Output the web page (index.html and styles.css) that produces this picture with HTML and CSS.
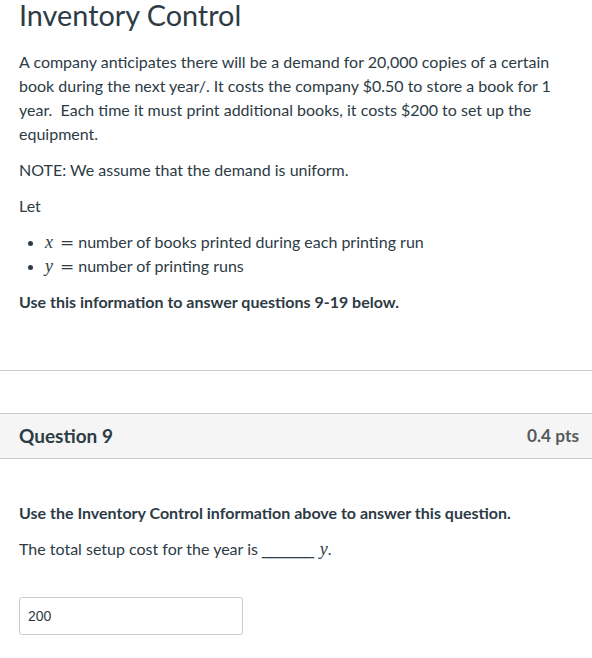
FILE: index.html
```html
<!DOCTYPE html>
<html lang="en">
<head>
<meta charset="utf-8">
<title>Inventory Control</title>
<link rel="stylesheet" href="styles.css">
</head>
<body>
<div class="intro">
  <h1 class="title">Inventory Control</h1>
  <p class="para">A company anticipates there will be a demand for 20,000 copies of a certain book during the next year/. It costs the company $0.50 to store a book for 1 year.&nbsp; Each time it must print additional books, it costs $200 to set up the equipment.</p>
  <p class="para">NOTE: We assume that the demand is uniform.</p>
  <p class="para">Let</p>
  <ul class="vars">
    <li><span class="math"><i class="mi">x</i><span class="mo">=</span></span>number of books printed during each printing run</li>
    <li><span class="math"><i class="mi">y</i><span class="mo">=</span></span>number of printing runs</li>
  </ul>
  <p class="para bold">Use this information to answer questions 9-19 below.</p>
</div>
<hr class="rule">
<section class="question">
  <header class="q-header">
    <span class="q-name">Question 9</span>
    <span class="q-pts">0.4 pts</span>
  </header>
  <div class="q-body">
    <p class="para bold">Use the Inventory Control information above to answer this question.</p>
    <p class="para">The total setup cost for the year is <span class="blank">______</span> <i class="mi after">y</i>.</p>
    <input class="answer" type="text" value="200">
  </div>
</section>
</body>
</html>
```

FILE: styles.css
```css
html, body {
  margin: 0;
  padding: 0;
  background: #fff;
}
body {
  font-family: Lato, "Open Sans", sans-serif;
  font-size: 16px;
  line-height: 24px;
  color: #2d3b45;
}
.intro {
  padding: 0 19px;
}
.title {
  font-size: 28.8px;
  font-weight: 400;
  line-height: 30px;
  margin: 0 0 20px;
}
.para {
  margin: 0 0 12px;
}
.bold {
  font-weight: 700;
}
.vars {
  margin: 0 0 12px;
  padding-left: 26px;
}
.vars li {
  height: 24px;
}
.math {
  line-height: 1;
}
.mi {
  font-family: "Liberation Serif", "DejaVu Serif", serif;
  font-style: italic;
  font-size: 18px;
  line-height: 1;
}
.mi.after {
  margin-left: 2px;
}
.mo {
  font-family: "DejaVu Serif", "Liberation Serif", serif;
  font-size: 17px;
  line-height: 1;
  margin: 0 4px 0 7px;
}
.blank {
  font-family: "Liberation Sans", Arial, sans-serif;
  letter-spacing: -0.3px;
}
.rule {
  border: 0;
  border-top: 1px solid #c7cdd1;
  margin: 56px 0 42px;
  height: 0;
}
.q-header {
  display: flex;
  justify-content: space-between;
  align-items: center;
  background: #f5f5f5;
  border-top: 1px solid #c7cdd1;
  border-bottom: 1px solid #c7cdd1;
  height: 44px;
  padding: 0 13px 0 19px;
}
.q-name {
  font-size: 19px;
  font-weight: 700;
}
.q-pts {
  font-size: 17.3px;
  font-weight: 700;
  color: #565b5e;
}
.q-body {
  padding: 42px 19px 0;
}
.answer {
  display: block;
  margin-top: 35px;
  box-sizing: border-box;
  width: 224px;
  height: 38px;
  padding: 0 8px;
  border: 1px solid #c7cdd1;
  border-radius: 3px;
  font-family: "Liberation Sans", Arial, sans-serif;
  font-size: 14px;
  color: #2d3b45;
  background: #fff;
}
```
